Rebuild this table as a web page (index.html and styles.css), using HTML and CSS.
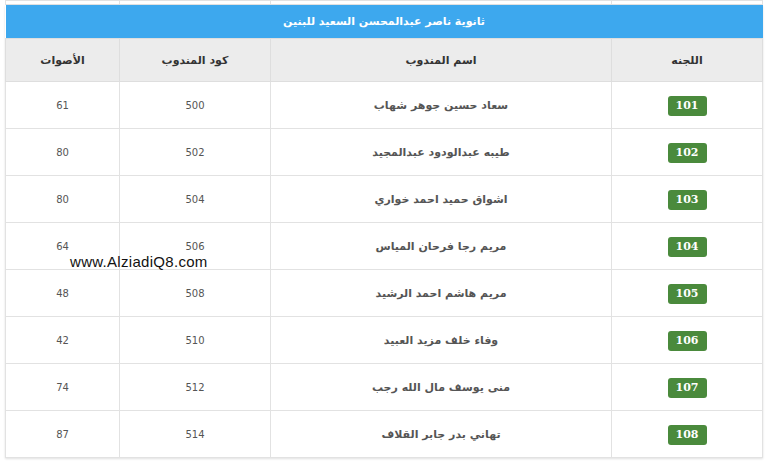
FILE: index.html
```html
<!DOCTYPE html>
<html lang="ar" dir="rtl">
<head>
<meta charset="utf-8">
<link rel="stylesheet" href="styles.css">
</head>
<body>
<div class="page">
  <table class="prev">
    <colgroup><col class="c-com"><col class="c-name"><col class="c-code"><col class="c-votes"></colgroup>
    <tr><td></td><td></td><td></td><td></td></tr>
  </table>
  <table class="results">
    <colgroup><col class="c-com"><col class="c-name"><col class="c-code"><col class="c-votes"></colgroup>
    <thead>
      <tr class="title-row"><th colspan="4">ثانوية ناصر عبدالمحسن السعيد للبنين</th></tr>
      <tr class="head-row"><th>اللجنه</th><th>اسم المندوب</th><th>كود المندوب</th><th>الأصوات</th></tr>
    </thead>
    <tbody>
      <tr><td><span class="badge">101</span></td><td class="name">سعاد حسين جوهر شهاب</td><td class="num">500</td><td class="num">61</td></tr>
      <tr><td><span class="badge">102</span></td><td class="name">طيبه عبدالودود عبدالمجيد</td><td class="num">502</td><td class="num">80</td></tr>
      <tr><td><span class="badge">103</span></td><td class="name">اشواق حميد احمد خواري</td><td class="num">504</td><td class="num">80</td></tr>
      <tr><td><span class="badge">104</span></td><td class="name">مريم رجا فرحان المياس</td><td class="num">506</td><td class="num">64</td></tr>
      <tr><td><span class="badge">105</span></td><td class="name">مريم هاشم احمد الرشيد</td><td class="num">508</td><td class="num">48</td></tr>
      <tr><td><span class="badge">106</span></td><td class="name">وفاء خلف مزيد العبيد</td><td class="num">510</td><td class="num">42</td></tr>
      <tr><td><span class="badge">107</span></td><td class="name">منى يوسف مال الله رجب</td><td class="num">512</td><td class="num">74</td></tr>
      <tr><td><span class="badge">108</span></td><td class="name">تهاني بدر جابر القلاف</td><td class="num">514</td><td class="num">87</td></tr>
    </tbody>
  </table>
  <div class="watermark" dir="ltr">www.AlziadiQ8.com</div>
</div>
</body>
</html>
```

FILE: styles.css
```css
html, body {
  margin: 0;
  padding: 0;
  background: #ffffff;
}

.page {
  position: relative;
  width: 768px;
  height: 463px;
  overflow: hidden;
  font-family: "DejaVu Sans", Tahoma, sans-serif;
}

table {
  border-collapse: collapse;
  table-layout: fixed;
  width: 757px;
  margin-right: 5px;
  margin-left: 6px;
}

.c-com { width: 151px; }
.c-name { width: 341px; }
.c-code { width: 151px; }
.c-votes { width: 114px; }

.prev td {
  height: 3px;
  padding: 0;
  border-left: 1px solid #e2e2e2;
  border-right: 1px solid #e2e2e2;
}

.results {
  box-shadow: 0 1px 2px rgba(0, 0, 0, 0.12);
}

.title-row th {
  height: 33px;
  padding: 0;
  background: #3da8ee;
  color: #ffffff;
  font-size: 11px;
  font-weight: bold;
  text-align: center;
  vertical-align: middle;
}

.head-row th {
  height: 42px;
  padding: 0;
  background: #ececec;
  color: #333333;
  font-size: 11px;
  font-weight: bold;
  text-align: center;
  border: 1px solid #dedede;
}

tbody td {
  height: 46px;
  padding: 0;
  text-align: center;
  vertical-align: middle;
  border: 1px solid #e2e2e2;
  background: #ffffff;
}

.name {
  color: #555555;
  font-size: 11px;
  font-weight: bold;
}

.num {
  color: #555555;
  font-family: "DejaVu Sans", Tahoma, sans-serif;
  font-size: 10px;
}

.badge {
  display: inline-block;
  width: 39px;
  height: 20px;
  line-height: 20px;
  border-radius: 3px;
  background: #4a8a3c;
  color: #ffffff;
  font-family: "DejaVu Serif", "Liberation Serif", serif;
  font-size: 11px;
  font-weight: bold;
  text-align: center;
}

.watermark {
  position: absolute;
  left: 70px;
  top: 253px;
  color: #111111;
  font-family: "Liberation Sans", Arial, sans-serif;
  font-size: 15px;
  letter-spacing: 0.3px;
}
```
